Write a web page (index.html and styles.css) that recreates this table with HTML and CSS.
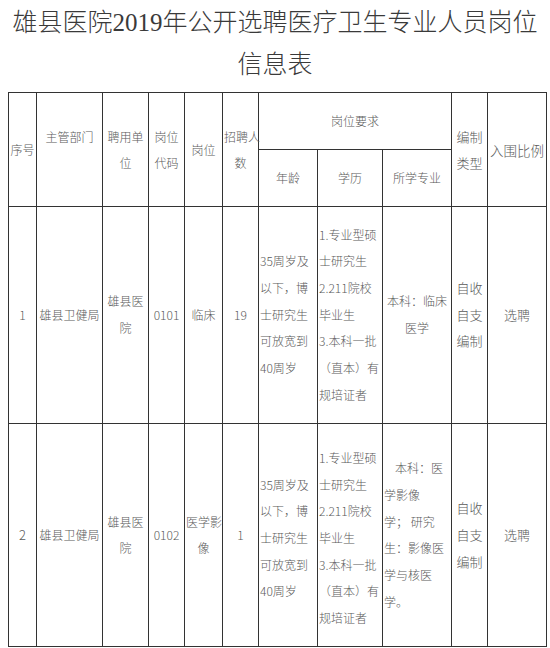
FILE: index.html
```html
<!DOCTYPE html>
<html lang="zh">
<head>
<meta charset="utf-8">
<link rel="stylesheet" href="styles.css">
</head>
<body>
<div class="title">
  <div class="title-line">雄县医院2019年公开选聘医疗卫生专业人员岗位</div>
  <div class="title-line">信息表</div>
</div>
<table class="jobs">
  <colgroup>
    <col class="c1"><col class="c2"><col class="c3"><col class="c4"><col class="c5"><col class="c6">
    <col class="c7"><col class="c8"><col class="c9"><col class="c10"><col class="c11">
  </colgroup>
  <tr class="hrow">
    <td rowspan="2">序号</td>
    <td rowspan="2">主管部门<br>&nbsp;</td>
    <td rowspan="2">聘用单<br>位</td>
    <td rowspan="2">岗位<br>代码</td>
    <td rowspan="2">岗位</td>
    <td rowspan="2">招聘人<br>数</td>
    <td colspan="3">岗位要求</td>
    <td rowspan="2" class="big">编制<br>类型</td>
    <td rowspan="2" class="bigger">入围比例</td>
  </tr>
  <tr class="hrow">
    <td>年龄</td>
    <td>学历</td>
    <td>所学专业</td>
  </tr>
  <tr class="drow">
    <td>1</td>
    <td>雄县卫健局</td>
    <td>雄县医<br>院</td>
    <td>0101</td>
    <td>临床</td>
    <td>19</td>
    <td class="left">35周岁及<br>以下，博<br>士研究生<br>可放宽到<br>40周岁</td>
    <td class="left">1.专业型硕<br>士研究生<br>2.211院校<br>毕业生<br>3.本科一批<br>（直本）有<br>规培证者</td>
    <td>本科：临床<br>医学</td>
    <td class="big">自收<br>自支<br>编制</td>
    <td class="big">选聘</td>
  </tr>
  <tr class="drow">
    <td class="big">2</td>
    <td>雄县卫健局</td>
    <td>雄县医<br>院</td>
    <td>0102</td>
    <td>医学影<br>像</td>
    <td>1</td>
    <td class="left low">35周岁及<br>以下，博<br>士研究生<br>可放宽到<br>40周岁</td>
    <td class="left low">1.专业型硕<br>士研究生<br>2.211院校<br>毕业生<br>3.本科一批<br>（直本）有<br>规培证者</td>
    <td class="left"><span class="indent">本科：医</span><br>学影像<br>学； 研究<br>生：影像医<br>学与核医<br>学。</td>
    <td class="big">自收<br>自支<br>编制</td>
    <td class="big">选聘</td>
  </tr>
</table>
</body>
</html>
```
FILE: styles.css
```css
html, body {
  margin: 0;
  padding: 0;
  background: #ffffff;
}

.title {
  padding-top: 2px;
  text-align: center;
  font-family: "Liberation Serif", "Noto Sans CJK SC", serif;
  font-size: 25px;
  font-weight: 300;
  line-height: 42px;
  color: #3a3a3a;
}

.jobs {
  margin: 6px 0 0 8px;
  width: 538px;
  table-layout: fixed;
  border-collapse: collapse;
  font-family: "Noto Sans CJK SC", sans-serif;
  font-size: 12px;
  font-weight: 300;
  line-height: 26.7px;
  color: #5a5a5a;
}

.c1 { width: 28px; }
.c2 { width: 66px; }
.c3 { width: 46px; }
.c4 { width: 36px; }
.c5 { width: 38px; }
.c6 { width: 36px; }
.c7 { width: 59px; }
.c8 { width: 65px; }
.c9 { width: 69px; }
.c10 { width: 36px; }
.c11 { width: 59px; }

.jobs td {
  border: 1px solid #333333;
  padding: 0 1px;
  text-align: center;
  vertical-align: middle;
  white-space: nowrap;
  overflow: visible;
}

.hrow td {
  height: 56px;
  line-height: 26px;
}

.drow td {
  height: 216.2px;
}

.jobs td.left {
  text-align: left;
}

.jobs td.low {
  padding-top: 6px;
}

.big {
  font-size: 13px;
}

.bigger {
  font-size: 13.5px;
}

.indent {
  padding-left: 11px;
}
```
